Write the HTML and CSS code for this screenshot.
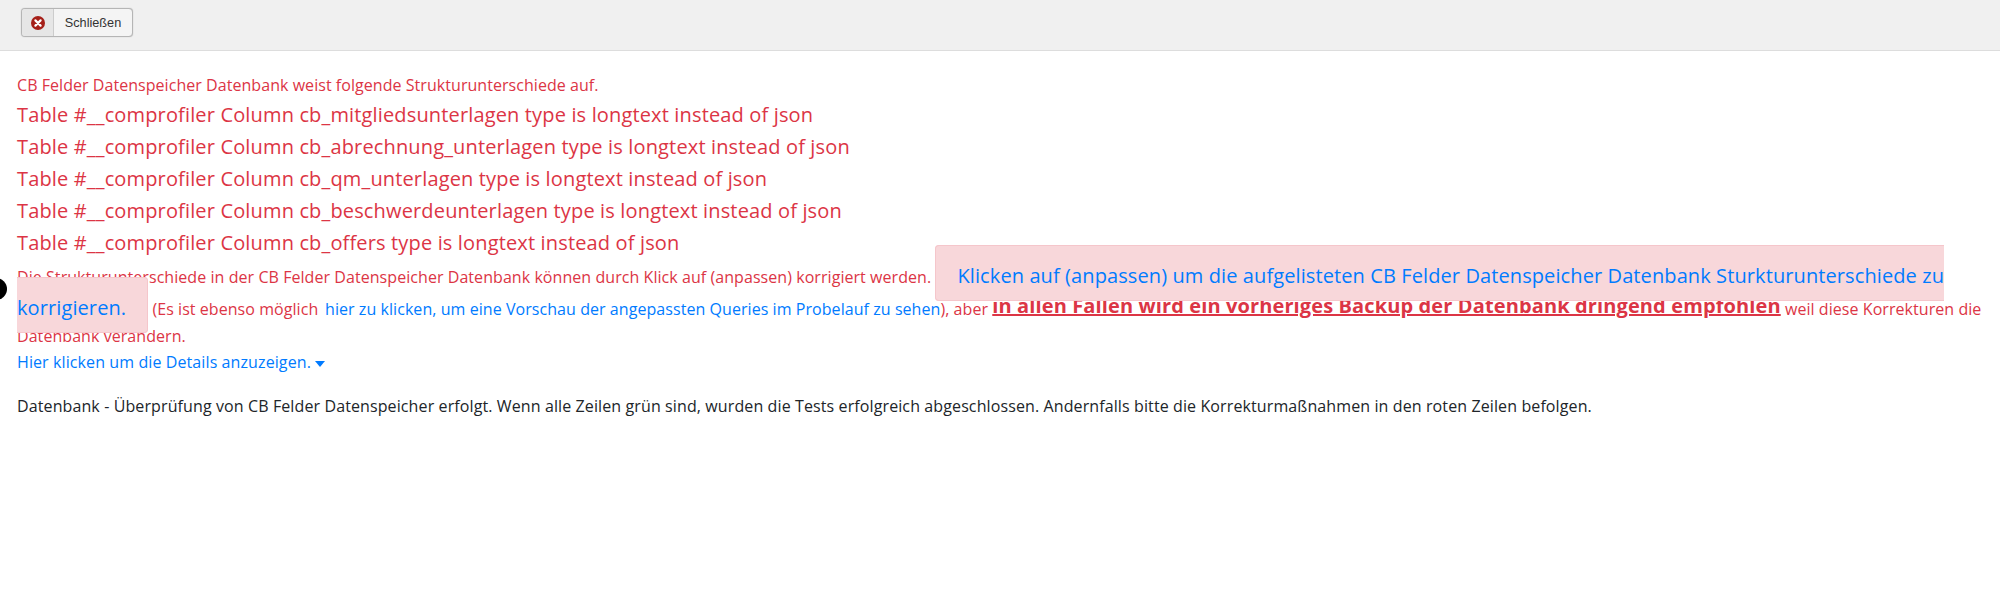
FILE: index.html
```html
<!DOCTYPE html>
<html lang="de">
<head>
<meta charset="utf-8">
<title>Datenbank</title>
<link rel="stylesheet" href="styles.css">
</head>
<body>
<div class="toolbar">
  <button class="close-btn" type="button">
    <span class="close-icon">
      <svg width="16" height="16" viewBox="0 0 16 16"><circle cx="8" cy="8" r="7" fill="#a51f18"/><path d="M5.4 5.4l5.2 5.2M10.6 5.4l-5.2 5.2" stroke="#fff" stroke-width="2.2" stroke-linecap="round"/></svg>
    </span>
    <span class="close-label">Schließen</span>
  </button>
</div>
<span class="dot"></span>
<main class="content">
  <div class="lead danger">CB Felder Datenspeicher Datenbank weist folgende Strukturunterschiede auf.</div>
  <div class="issue danger">Table #__comprofiler Column cb_mitgliedsunterlagen type is longtext instead of json</div>
  <div class="issue danger">Table #__comprofiler Column cb_abrechnung_unterlagen type is longtext instead of json</div>
  <div class="issue danger">Table #__comprofiler Column cb_qm_unterlagen type is longtext instead of json</div>
  <div class="issue danger">Table #__comprofiler Column cb_beschwerdeunterlagen type is longtext instead of json</div>
  <div class="issue danger">Table #__comprofiler Column cb_offers type is longtext instead of json</div>
  <div class="fix danger">Die Strukturunterschiede in der CB Felder Datenspeicher Datenbank können durch Klick auf (anpassen) korrigiert werden. <a class="alert" href="#">Klicken auf (anpassen) um die aufgelisteten CB Felder Datenspeicher Datenbank Sturkturunterschiede zu korrigieren.</a> (Es ist ebenso möglich <a class="link link-inline" href="#">hier zu klicken, um eine Vorschau der angepassten Queries im Probelauf zu sehen</a>), aber <strong class="warn">in allen Fällen wird ein vorheriges Backup der Datenbank dringend empfohlen</strong> weil diese Korrekturen die Datenbank verändern.</div>
  <div class="details"><a class="link" href="#">Hier klicken um die Details anzuzeigen.</a> <span class="caret"></span></div>
  <p class="summary">Datenbank - Überprüfung von CB Felder Datenspeicher erfolgt. Wenn alle Zeilen grün sind, wurden die Tests erfolgreich abgeschlossen. Andernfalls bitte die Korrekturmaßnahmen in den roten Zeilen befolgen.</p>
</main>
</body>
</html>
```
FILE: styles.css
```css
* { box-sizing: border-box; }
html, body { margin: 0; padding: 0; background: #fff; }
body { font-family: "Open Sans", "Noto Sans", sans-serif; font-size: 16px; line-height: 24px; color: #212529; height: 603px; overflow: hidden; }
.toolbar { height: 51px; background: #f0f0f0; border-bottom: 1px solid #ddd; padding: 8px 21px; }
.close-btn { display: flex; align-items: stretch; height: 29px; width: 112px; padding: 0; background: #f4f4f4; border: 1px solid #b5b5b5; box-shadow: 0 0 1px #aaa; border-radius: 4px; font-family: "Liberation Sans", sans-serif; font-size: 12.7px; color: #333; overflow: hidden; }
.close-icon { width: 32px; display: flex; align-items: center; justify-content: center; background: #e6e6e6; border-right: 1px solid #ccc; }
.close-label { flex: 1; align-self: center; text-align: center; }
.dot { position: absolute; left: -15px; top: 278px; width: 22px; height: 22px; border-radius: 50%; background: #000; }
.content { padding: 22px 17px 0; }
.danger { color: #dc3545; }
.lead { font-size: 16px; line-height: 24px; letter-spacing: 0.05px; height: 26px; }
.issue { font-size: 20px; line-height: 32px; letter-spacing: 0.15px; }
.fix { margin-top: 1px; font-size: 16px; line-height: 24px; letter-spacing: 0.06px; }
.alert { position: relative; padding: 16px 21px 11px; background: #f8d7da; border: 1px solid #f5c6cb; border-radius: 4px; color: #007bff; font-size: 20px; line-height: 32px; letter-spacing: 0.1px; text-decoration: none; }
.link { color: #007bff; text-decoration: none; }
.link-inline { margin-left: 2.5px; }
.warn { font-size: 20px; text-decoration: underline; letter-spacing: 0.12px; vertical-align: 2px; }
.details { margin-top: 2px; letter-spacing: 0.1px; line-height: 24px; }
.caret { display: inline-block; vertical-align: middle; border-top: 6px solid #007bff; border-left: 5px solid transparent; border-right: 5px solid transparent; }
.summary { margin: 20px 0 0; letter-spacing: 0.11px; }
```
